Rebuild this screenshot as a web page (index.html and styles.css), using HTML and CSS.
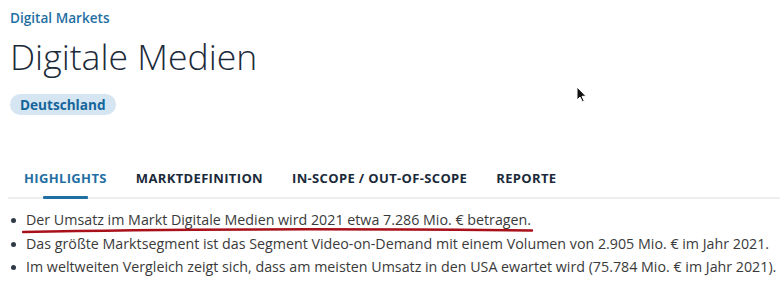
FILE: index.html
```html
<!DOCTYPE html>
<html lang="de">
<head>
<meta charset="utf-8">
<link rel="stylesheet" href="styles.css">
</head>
<body>
<div class="page">
  <header class="head">
    <a class="crumb">Digital Markets</a>
    <h1 class="title">Digitale Medien</h1>
    <span class="badge">Deutschland</span>
  </header>
  <nav class="tabs">
    <span class="tab active">Highlights</span>
    <span class="tab">Marktdefinition</span>
    <span class="tab">In-Scope / Out-Of-Scope</span>
    <span class="tab">Reporte</span>
  </nav>
  <ul class="list">
    <li class="item marked">Der Umsatz im Markt Digitale Medien wird 2021 etwa 7.286 Mio. € betragen.
      <svg class="mark" width="512" height="8" viewBox="0 0 512 8"><path d="M1 6 C 120 3.5, 300 2.5, 510 4.5" fill="none" stroke="#a8101a" stroke-width="2.5" stroke-linecap="round"/></svg>
    </li>
    <li class="item">Das größte Marktsegment ist das Segment Video-on-Demand mit einem Volumen von 2.905 Mio. € im Jahr 2021.</li>
    <li class="item">Im weltweiten Vergleich zeigt sich, dass am meisten Umsatz in den USA ewartet wird (75.784 Mio. € im Jahr 2021).</li>
  </ul>
  <svg class="cursor" width="12" height="18" viewBox="0 0 12 18"><path d="M1 1 L1 14 L4 11 L6.5 16 L8.3 15.2 L6 10.3 L10 10.3 Z" fill="#111" stroke="#fff" stroke-width="1"/></svg>
</div>
</body>
</html>
```
FILE: styles.css
```css
* { box-sizing: border-box; }
html, body { margin: 0; padding: 0; background: #fff; }
body { font-family: "Open Sans", "Liberation Sans", sans-serif; }
.page { position: relative; width: 780px; height: 284px; overflow: hidden; padding: 9px 0 0 0; }
.head { padding-left: 10px; display: flex; flex-direction: column; align-items: flex-start; }
.crumb { font-size: 13.6px; font-weight: 600; color: #1f6fa3; line-height: 18px; }
.title { margin: 6px 0 0 0; font-size: 35.6px; font-weight: 300; color: #1b2a3a; line-height: 46px; letter-spacing: 0; }
.badge { margin-top: 15px; background: #d5e5f1; color: #14659c; font-weight: 700; font-size: 13.6px; line-height: 21px; padding: 0 10px; border-radius: 11px; }
.tabs { display: flex; margin: 48px 0 0 8px; border-bottom: 2px solid #eeeeee; padding-left: 16px; gap: 29px; }
.tab { position: relative; font-size: 13px; font-weight: 700; text-transform: uppercase; color: #1b2a3a; letter-spacing: 0.35px; padding: 6px 0 10px; }
.tab.active { color: #1f6fa3; }
.tab.active::after { content: ""; position: absolute; left: 19px; width: 45px; bottom: -2px; height: 3px; background: #1f6fa3; border-radius: 1px; }
.list { list-style: none; margin: 9px 0 0 0; padding: 0 0 0 10px; }
.item { position: relative; font-size: 14.25px; color: #3a3a3a; line-height: 23.6px; padding-left: 16px; white-space: nowrap; }
.item::before { content: ""; position: absolute; left: 1px; top: 10px; width: 5px; height: 5px; border-radius: 50%; background: #2e3a46; }
.mark { position: absolute; left: 12px; top: 18px; }
.cursor { position: absolute; left: 576px; top: 86px; }
```
